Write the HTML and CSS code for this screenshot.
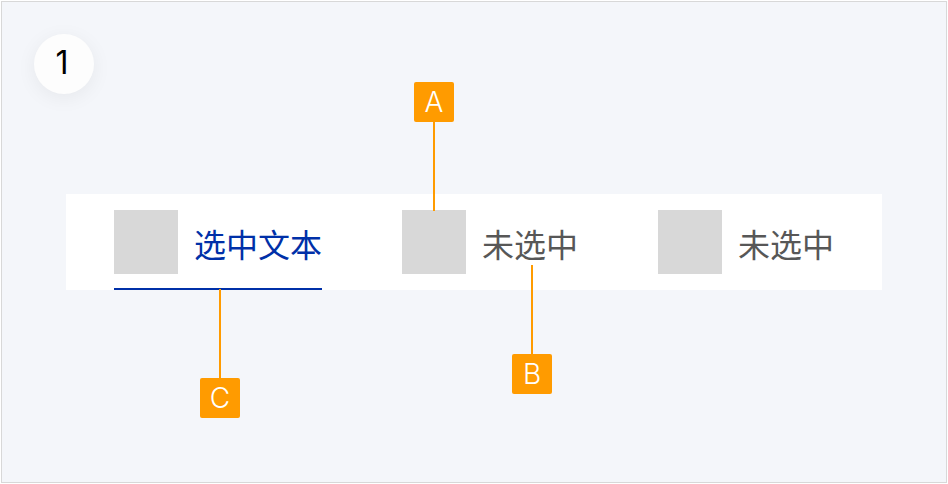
FILE: index.html
```html
<!DOCTYPE html>
<html lang="zh-CN">
<head>
  <meta charset="utf-8">
  <meta name="viewport" content="width=device-width, initial-scale=1">
  <title>选中文本</title>
  <link rel="stylesheet" href="styles.css">
</head>
<body>
  <main class="board">
    <div class="step">1</div>
    <div class="tabs" role="tablist">
      <button class="tab tab-selected" type="button" role="tab" aria-selected="true">
        <span class="icon"></span>
        <span class="label">选中文本</span>
        <span class="callout callout-below callout-line"><span class="tag">C</span></span>
      </button>
      <button class="tab" type="button" role="tab" aria-selected="false">
        <span class="icon"><span class="callout callout-above"><span class="tag">A</span></span></span>
        <span class="label">未选中<span class="callout callout-below callout-text"><span class="tag">B</span></span></span>
      </button>
      <button class="tab" type="button" role="tab" aria-selected="false">
        <span class="icon"></span>
        <span class="label">未选中</span>
      </button>
    </div>
  </main>
</body>
</html>
```

FILE: styles.css
```css
* {
  box-sizing: border-box;
}

body {
  margin: 0;
  padding: 1px;
  background: #fff;
  font-family: "Noto Sans CJK SC", sans-serif;
}

.board {
  min-height: calc(100vh - 2px);
  padding: 32px 64px;
  border: 1px solid #d8d8d8;
  background: #f4f6fa;
}

.step {
  width: 60px;
  height: 60px;
  margin: 0 0 100px -32px;
  padding-right: 4px;
  border-radius: 50%;
  background: #fdfdfd;
  box-shadow: 0 4px 20px rgba(0, 0, 0, 0.06);
  color: #000;
  font-family: Inter, sans-serif;
  font-size: 32px;
  line-height: 58px;
  text-align: center;
}

.tabs {
  display: flex;
  gap: 80px;
  padding: 0 48px;
  background: #fff;
}

.tab {
  position: relative;
  display: flex;
  gap: 16px;
  padding: 16px 0 14px;
  border: 0;
  border-bottom: 2px solid transparent;
  background: none;
  color: #575757;
  font: 32px/66px "Noto Sans CJK SC", sans-serif;
  white-space: nowrap;
}

.tab-selected {
  border-bottom-color: #0030a8;
  color: #0030a8;
}

.icon {
  position: relative;
  width: 64px;
  height: 64px;
  background: #d8d8d8;
}

.label {
  position: relative;
  height: 64px;
}

/* A callout is a tag joined to its target by a leader line. */
.callout {
  position: absolute;
  left: 50%;
  display: flex;
  flex-direction: column;
  align-items: center;
  transform: translateX(-50%);
}

.callout::before,
.callout-above::after {
  content: "";
  width: 2px;
  height: 89px;
  background: #ff9b00;
}

.callout-above::before {
  display: none;
}

.callout-above {
  bottom: 63px;
}

.callout-below {
  margin-left: 2px;
}

.callout-line {
  top: 95px;
}

.callout-text {
  top: 55px;
}

.tag {
  width: 40px;
  height: 40px;
  border-radius: 2px;
  background: #ff9b00;
  color: #fff;
  font: 300 28px/40px Inter, sans-serif;
  text-align: center;
}
```
